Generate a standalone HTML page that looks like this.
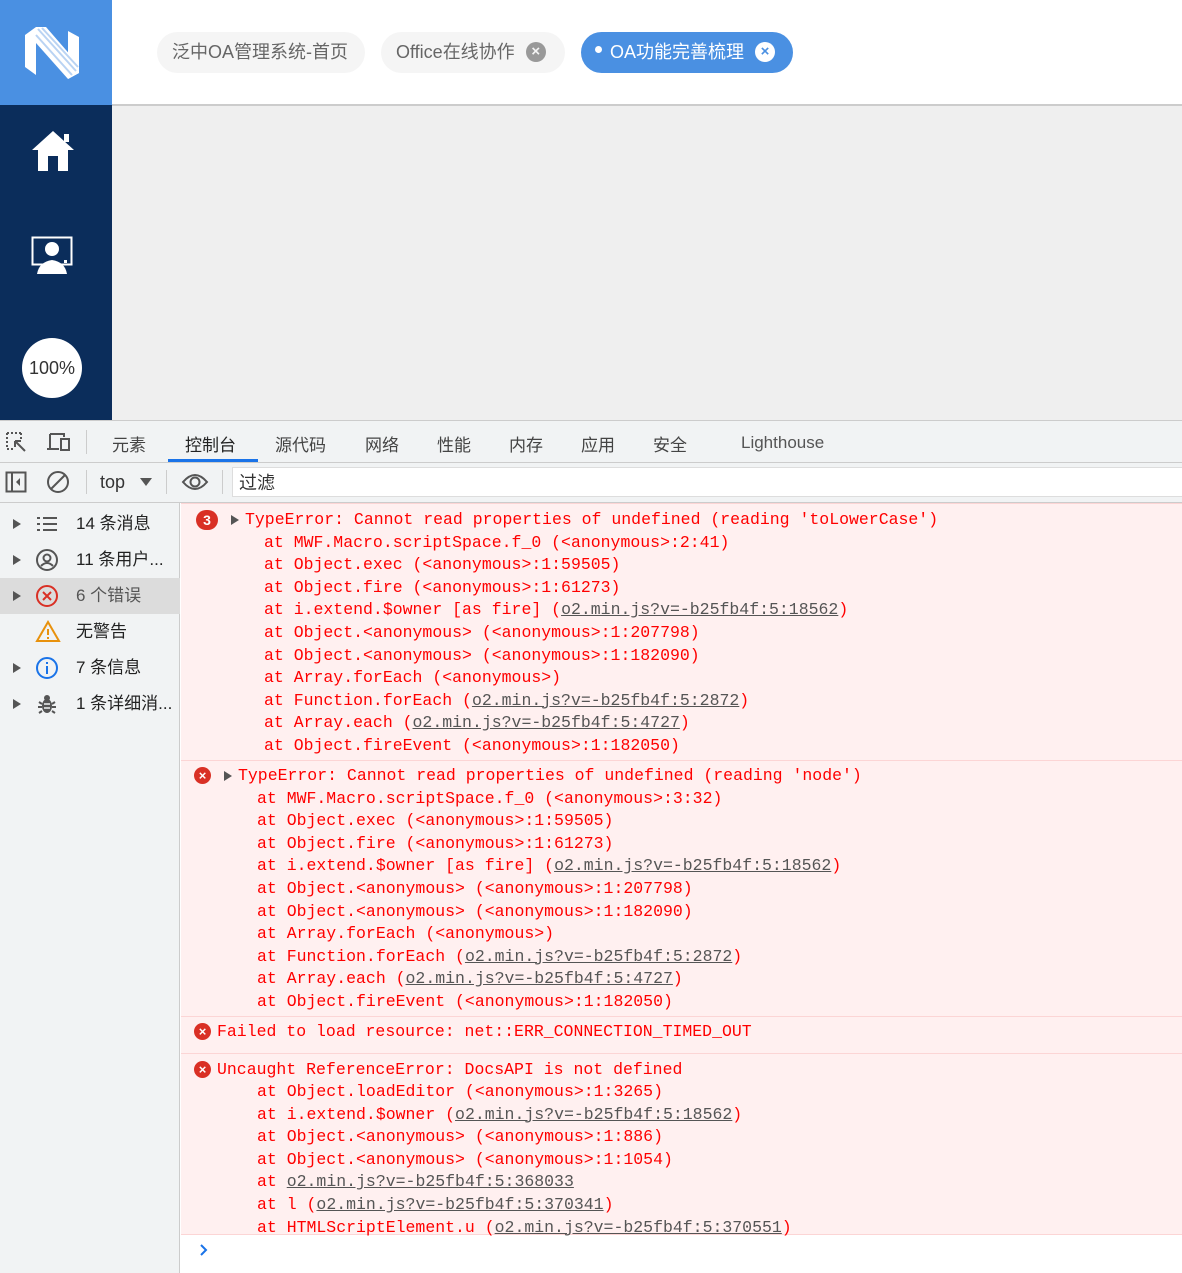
<!DOCTYPE html>
<html><head><meta charset="utf-8">
<style>
*{margin:0;padding:0;box-sizing:border-box}
body{width:1182px;height:1273px;overflow:hidden;position:relative;background:#fff;font-family:"Liberation Sans","Noto Sans CJK SC",sans-serif}
.a{position:absolute}
.tab{position:absolute;top:32px;height:41px;border-radius:21px;background:#f5f5f5;color:#666;font-size:18px;line-height:41px;white-space:nowrap}
.x{display:inline-block;width:20px;height:20px;border-radius:50%;background:#999;color:#f5f5f5;font-size:15px;line-height:20px;text-align:center;font-weight:bold;vertical-align:middle;margin-top:-3px}
.dt{position:absolute;top:431px;font-size:17px;color:#444}
.side{position:absolute;left:0;width:180px;height:36px;font-size:17px;color:#222;line-height:36px}
.side .t{position:absolute;left:76px}
.side .tri{position:absolute;left:13px;top:13px;width:0;height:0;border-left:8px solid #555;border-top:5px solid transparent;border-bottom:5px solid transparent}
.side svg{position:absolute;left:35px;top:6px}
pre{font-family:"Liberation Mono",monospace;font-size:16.5px;line-height:22.6px;color:#f00;position:absolute;white-space:pre}
u{color:#555;text-decoration:underline}
.blk{position:absolute;left:181px;width:1001px;border-bottom:1px solid #fcd5d5;background:#fff0f0}
.eic{position:absolute;width:17px;height:17px;border-radius:50%;background:#d93025;color:#fff;font-size:13px;font-weight:bold;text-align:center;line-height:17px;font-family:"Liberation Sans",sans-serif}
.arr{position:absolute;width:0;height:0;border-left:8px solid #555;border-top:5px solid transparent;border-bottom:5px solid transparent}
</style></head><body>
<!-- sidebar -->
<div class="a" style="left:0;top:0;width:112px;height:105px;background:#4a90e2"></div>
<div class="a" style="left:0;top:105px;width:112px;height:315px;background:#0b2d5b"></div>
<svg class="a" style="left:24px;top:25px" width="56" height="56" viewBox="0 0 56 56">
<path d="M1 10 L12 2 L12 50 L1 42Z" fill="#fff"/>
<path d="M44 6 L55 12 L55 48 L44 54Z" fill="#fff"/>
<path d="M12 2 L22 2 L55 40 L55 48 L44 54 L12 18Z" fill="#fff"/>
<path d="M14 4 L52 46 M18 3 L54 42 M12 10 L48 50" stroke="#b9d3f3" stroke-width="2"/>
</svg>
<svg class="a" style="left:30px;top:129px" width="46" height="44" viewBox="0 0 46 44"><path d="M23 2 L44 21 L38 21 L38 42 L28 42 L28 27 L18 27 L18 42 L8 42 L8 21 L2 21Z" fill="#fff"/><rect x="34" y="5" width="5" height="8" fill="#fff"/></svg>
<svg class="a" style="left:31px;top:236px" width="44" height="40" viewBox="0 0 44 40"><rect x="1.5" y="1.5" width="39" height="27" fill="none" stroke="#fff" stroke-width="2"/><circle cx="21" cy="13" r="7" fill="#fff"/><path d="M6 38 Q8 26 21 24 Q34 26 36 38Z" fill="#fff"/><rect x="33" y="24" width="3" height="3" fill="#fff"/></svg>
<div class="a" style="left:22px;top:338px;width:60px;height:60px;border-radius:50%;background:#fff;text-align:center;line-height:60px;font-size:18px;color:#333">100%</div>
<!-- header -->
<div class="a" style="left:112px;top:104px;width:1070px;height:2px;background:#ccc"></div>
<div class="a" style="left:112px;top:106px;width:1070px;height:314px;background:#efefef"></div>
<div class="tab" style="left:157px;width:208px;padding-left:15px">泛中OA管理系统-首页</div>
<div class="tab" style="left:381px;width:184px;padding-left:15px">Office在线协作 <span class="x" style="margin-left:6px">×</span></div>
<div class="tab" style="left:581px;width:212px;background:#4a90e2;color:#fff;padding-left:14px"><span style="display:inline-block;width:7px;height:7px;border-radius:50%;background:#fff;vertical-align:middle;margin-top:-8px;margin-right:8px"></span>OA功能完善梳理 <span class="x" style="background:#fff;color:#4a90e2;margin-left:6px">×</span></div>
<!-- devtools tab bar -->
<div class="a" style="left:0;top:420px;width:1182px;height:43px;background:#f1f3f4;border-top:1px solid #ccc;border-bottom:1px solid #ccc"></div>
<svg class="a" style="left:5px;top:431px" width="24" height="22" viewBox="0 0 24 22"><path d="M2 2h14M2 2v16M2 18h6M16 2v6" stroke="#555" stroke-width="2" stroke-dasharray="2 2" fill="none"/><path d="M10 10 L20 20 M10 10 h6 M10 10 v6" stroke="#555" stroke-width="2" fill="none"/></svg>
<svg class="a" style="left:46px;top:432px" width="26" height="20" viewBox="0 0 26 20"><path d="M4 2h14v3M4 2v15M1 17h12" stroke="#555" stroke-width="2" fill="none"/><rect x="15" y="7" width="8" height="11" fill="none" stroke="#555" stroke-width="2"/></svg>
<div class="a" style="left:86px;top:430px;width:1px;height:24px;background:#ccc"></div>
<div class="dt" style="left:112px">元素</div>
<div class="dt" style="left:185px;color:#222">控制台</div>
<div class="a" style="left:168px;top:459px;width:90px;height:3px;background:#1a73e8"></div>
<div class="dt" style="left:275px">源代码</div>
<div class="dt" style="left:365px">网络</div>
<div class="dt" style="left:437px">性能</div>
<div class="dt" style="left:509px">内存</div>
<div class="dt" style="left:581px">应用</div>
<div class="dt" style="left:653px">安全</div>
<div class="dt" style="left:741px;top:433px;color:#555">Lighthouse</div>
<!-- toolbar -->
<div class="a" style="left:0;top:463px;width:1182px;height:40px;background:#f1f3f4;border-bottom:1px solid #ccc"></div>
<svg class="a" style="left:5px;top:471px" width="22" height="22" viewBox="0 0 22 22"><rect x="1.5" y="1.5" width="19" height="19" fill="none" stroke="#555" stroke-width="2"/><path d="M7 2v18" stroke="#555" stroke-width="2"/><path d="M15 7 L11 11 L15 15Z" fill="#555"/></svg>
<svg class="a" style="left:46px;top:470px" width="24" height="24" viewBox="0 0 24 24"><circle cx="12" cy="12" r="10" fill="none" stroke="#555" stroke-width="2"/><path d="M5 19 L19 5" stroke="#555" stroke-width="2"/></svg>
<div class="a" style="left:86px;top:470px;width:1px;height:24px;background:#ccc"></div>
<div class="a" style="left:100px;top:472px;font-size:18px;color:#333">top</div>
<div class="a" style="left:140px;top:478px;border-top:8px solid #555;border-left:6px solid transparent;border-right:6px solid transparent"></div>
<div class="a" style="left:166px;top:470px;width:1px;height:24px;background:#ccc"></div>
<svg class="a" style="left:181px;top:472px" width="28" height="20" viewBox="0 0 28 20"><path d="M2 10 Q14 -4 26 10 Q14 24 2 10Z" fill="none" stroke="#555" stroke-width="2"/><circle cx="14" cy="10" r="4.5" fill="none" stroke="#555" stroke-width="2"/></svg>
<div class="a" style="left:222px;top:470px;width:1px;height:24px;background:#ccc"></div>
<div class="a" style="left:232px;top:467px;width:950px;height:30px;background:#fff;border:1px solid #ddd;border-right:none;font-size:18px;line-height:30px;padding-left:6px;color:#333">过滤</div>
<!-- side panel -->
<div class="a" style="left:0;top:503px;width:180px;height:770px;background:#f1f3f4;border-right:1px solid #ccc"></div>
<div class="side" style="top:506px"><span class="tri"></span><svg width="24" height="24" viewBox="0 0 24 24"><g fill="#555"><rect x="2" y="5" width="3" height="2"/><rect x="8" y="5" width="14" height="2"/><rect x="2" y="11" width="3" height="2"/><rect x="8" y="11" width="14" height="2"/><rect x="2" y="17" width="3" height="2"/><rect x="8" y="17" width="14" height="2"/></g></svg><span class="t">14 条消息</span></div>
<div class="side" style="top:542px"><span class="tri"></span><svg width="24" height="24" viewBox="0 0 24 24"><circle cx="12" cy="12" r="10" fill="none" stroke="#555" stroke-width="2"/><circle cx="12" cy="10" r="3.5" fill="none" stroke="#555" stroke-width="2"/><path d="M6 18 Q12 12 18 18" fill="none" stroke="#555" stroke-width="2"/></svg><span class="t">11 条用户...</span></div>
<div class="side" style="top:578px;background:#dcdcdc"><span class="tri"></span><svg width="24" height="24" viewBox="0 0 24 24"><circle cx="12" cy="12" r="10" fill="none" stroke="#d93025" stroke-width="2"/><path d="M8 8 L16 16 M16 8 L8 16" stroke="#d93025" stroke-width="2"/></svg><span class="t" style="color:#555">6 个错误</span></div>
<div class="side" style="top:614px"><svg width="26" height="24" viewBox="0 0 26 24"><path d="M13 2 L24 21 L2 21Z" fill="none" stroke="#e8910c" stroke-width="2"/><path d="M13 9v6M13 17v2" stroke="#e8910c" stroke-width="2"/></svg><span class="t">无警告</span></div>
<div class="side" style="top:650px"><span class="tri"></span><svg width="24" height="24" viewBox="0 0 24 24"><circle cx="12" cy="12" r="10" fill="none" stroke="#1a73e8" stroke-width="2"/><path d="M12 10v8M12 6v2" stroke="#1a73e8" stroke-width="2"/></svg><span class="t">7 条信息</span></div>
<div class="side" style="top:686px"><span class="tri"></span><svg width="24" height="24" viewBox="0 0 24 24"><ellipse cx="12" cy="14" rx="5" ry="7" fill="#555"/><circle cx="12" cy="6" r="3" fill="#555"/><path d="M4 10l3 2M20 10l-3 2M3 15h4M21 15h-4M4 21l3-2M20 21l-3-2" stroke="#555" stroke-width="2"/><path d="M9 12h6M9 16h6" stroke="#f1f3f4" stroke-width="1.5"/></svg><span class="t">1 条详细消...</span></div>
<!-- console -->
<div class="blk" style="top:503px;height:258px;border-top:1px solid #fcd5d5"></div>
<div class="blk" style="top:761px;height:256px"></div>
<div class="blk" style="top:1017px;height:37px"></div>
<div class="blk" style="top:1054px;height:181px"></div>
<div class="eic" style="left:196px;top:510px;width:22px;height:20px;line-height:20px;border-radius:10px;font-size:14px">3</div>
<div class="arr" style="left:231px;top:515px"></div>
<pre style="left:245px;top:509px">TypeError: Cannot read properties of undefined (reading 'toLowerCase')</pre>
<pre style="left:264px;top:531.6px">at MWF.Macro.scriptSpace.f_0 (&lt;anonymous&gt;:2:41)
at Object.exec (&lt;anonymous&gt;:1:59505)
at Object.fire (&lt;anonymous&gt;:1:61273)
at i.extend.$owner [as fire] (<u>o2.min.js?v=-b25fb4f:5:18562</u>)
at Object.&lt;anonymous&gt; (&lt;anonymous&gt;:1:207798)
at Object.&lt;anonymous&gt; (&lt;anonymous&gt;:1:182090)
at Array.forEach (&lt;anonymous&gt;)
at Function.forEach (<u>o2.min.js?v=-b25fb4f:5:2872</u>)
at Array.each (<u>o2.min.js?v=-b25fb4f:5:4727</u>)
at Object.fireEvent (&lt;anonymous&gt;:1:182050)</pre>
<div class="eic" style="left:194px;top:767px">×</div>
<div class="arr" style="left:224px;top:771px"></div>
<pre style="left:238px;top:765px">TypeError: Cannot read properties of undefined (reading 'node')</pre>
<pre style="left:257px;top:787.6px">at MWF.Macro.scriptSpace.f_0 (&lt;anonymous&gt;:3:32)
at Object.exec (&lt;anonymous&gt;:1:59505)
at Object.fire (&lt;anonymous&gt;:1:61273)
at i.extend.$owner [as fire] (<u>o2.min.js?v=-b25fb4f:5:18562</u>)
at Object.&lt;anonymous&gt; (&lt;anonymous&gt;:1:207798)
at Object.&lt;anonymous&gt; (&lt;anonymous&gt;:1:182090)
at Array.forEach (&lt;anonymous&gt;)
at Function.forEach (<u>o2.min.js?v=-b25fb4f:5:2872</u>)
at Array.each (<u>o2.min.js?v=-b25fb4f:5:4727</u>)
at Object.fireEvent (&lt;anonymous&gt;:1:182050)</pre>
<div class="eic" style="left:194px;top:1023px">×</div>
<pre style="left:217px;top:1021px">Failed to load resource: net::ERR_CONNECTION_TIMED_OUT</pre>
<div class="eic" style="left:194px;top:1061px">×</div>
<pre style="left:217px;top:1059px">Uncaught ReferenceError: DocsAPI is not defined</pre>
<pre style="left:257px;top:1081px">at Object.loadEditor (&lt;anonymous&gt;:1:3265)
at i.extend.$owner (<u>o2.min.js?v=-b25fb4f:5:18562</u>)
at Object.&lt;anonymous&gt; (&lt;anonymous&gt;:1:886)
at Object.&lt;anonymous&gt; (&lt;anonymous&gt;:1:1054)
at <u>o2.min.js?v=-b25fb4f:5:368033</u>
at l (<u>o2.min.js?v=-b25fb4f:5:370341</u>)
at HTMLScriptElement.u (<u>o2.min.js?v=-b25fb4f:5:370551</u>)</pre>
<svg class="a" style="left:198px;top:1242px" width="12" height="16" viewBox="0 0 12 16"><path d="M3 3 L8 8 L3 13" stroke="#1a73e8" stroke-width="2" fill="none"/></svg>
</body></html>
